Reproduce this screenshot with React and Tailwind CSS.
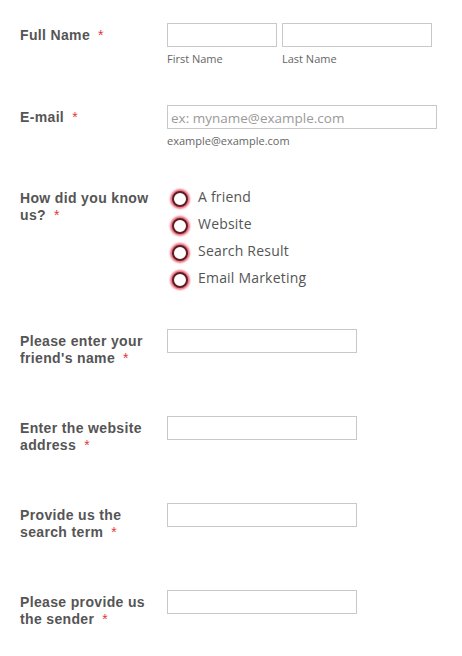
import React from "react";

const labelFont = { fontFamily: '"Liberation Sans", Arial, sans-serif' };
const bodyFont = { fontFamily: '"Open Sans", "DejaVu Sans", sans-serif' };

// Left column label with a red "required" star
const Label = ({ text, offset = "pt-[4px]" }) => (
  <div
    className={`w-[140px] shrink-0 pr-[2px] ${offset} text-[14px] font-bold leading-[17px] tracking-[0.35px] text-[#555]`}
    style={labelFont}
  >
    {text}
    <span className="ml-[8px] font-normal text-[#e3363a]">*</span>
  </div>
);

const TextBox = ({ width, placeholder }) => (
  <input
    type="text"
    placeholder={placeholder}
    className={`${width} block h-[24px] border border-[#c9c9c9] bg-white px-[3px] pt-[2px] text-[13.5px] text-[#555] outline-none placeholder:text-[#9a9a9a]`}
    style={bodyFont}
  />
);

const Sub = ({ children, className = "" }) => (
  <div
    className={`mt-[5px] text-[11px] leading-[14px] text-[#666] ${className}`}
    style={bodyFont}
  >
    {children}
  </div>
);

const Radio = ({ label }) => (
  <label className="flex h-[27px] items-center">
    <span className="ml-[5px] mt-[4px] h-[16px] w-[16px] shrink-0 rounded-full border-2 border-[#5a1e24] bg-white shadow-[0_0_2px_2px_rgba(232,70,90,0.8)]" />
    <span
      className="ml-[10px] text-[14px] leading-[19px] tracking-[0.2px] text-[#555]"
      style={bodyFont}
    >
      {label}
    </span>
  </label>
);

const options = ["A friend", "Website", "Search Result", "Email Marketing"];

const simpleRows = [
  "Please enter your friend's name",
  "Enter the website address",
  "Provide us the search term",
  "Please provide us the sender",
];

export default function App() {
  return (
    <div className="min-h-[656px] w-[462px] bg-white pt-[23px]">
      {/* Full name */}
      <div className="flex h-[82px] pl-[20px]">
        <Label text="Full Name" />
        <div className="ml-[7px] flex gap-[5px]">
          <div>
            <TextBox width="w-[110px]" />
            <Sub>First Name</Sub>
          </div>
          <div>
            <TextBox width="w-[150px]" />
            <Sub>Last Name</Sub>
          </div>
        </div>
      </div>

      {/* E-mail */}
      <div className="flex h-[78px] pl-[20px]">
        <Label text="E-mail" />
        <div className="ml-[7px]">
          <TextBox width="w-[270px]" placeholder="ex: myname@example.com" />
          <Sub className="mt-[5px]">example@example.com</Sub>
        </div>
      </div>

      {/* How did you know us */}
      <div className="flex h-[146px] pl-[20px]">
        <Label text="How did you know us?" offset="pt-[7px]" />
        <div className="ml-[7px] flex flex-col">
          {options.map((o) => (
            <Radio key={o} label={o} />
          ))}
        </div>
      </div>

      {simpleRows.map((r) => (
        <div key={r} className="flex h-[87px] pl-[20px]">
          <Label text={r} offset="pt-[4px]" />
          <div className="ml-[7px]">
            <TextBox width="w-[190px]" />
          </div>
        </div>
      ))}
    </div>
  );
}
